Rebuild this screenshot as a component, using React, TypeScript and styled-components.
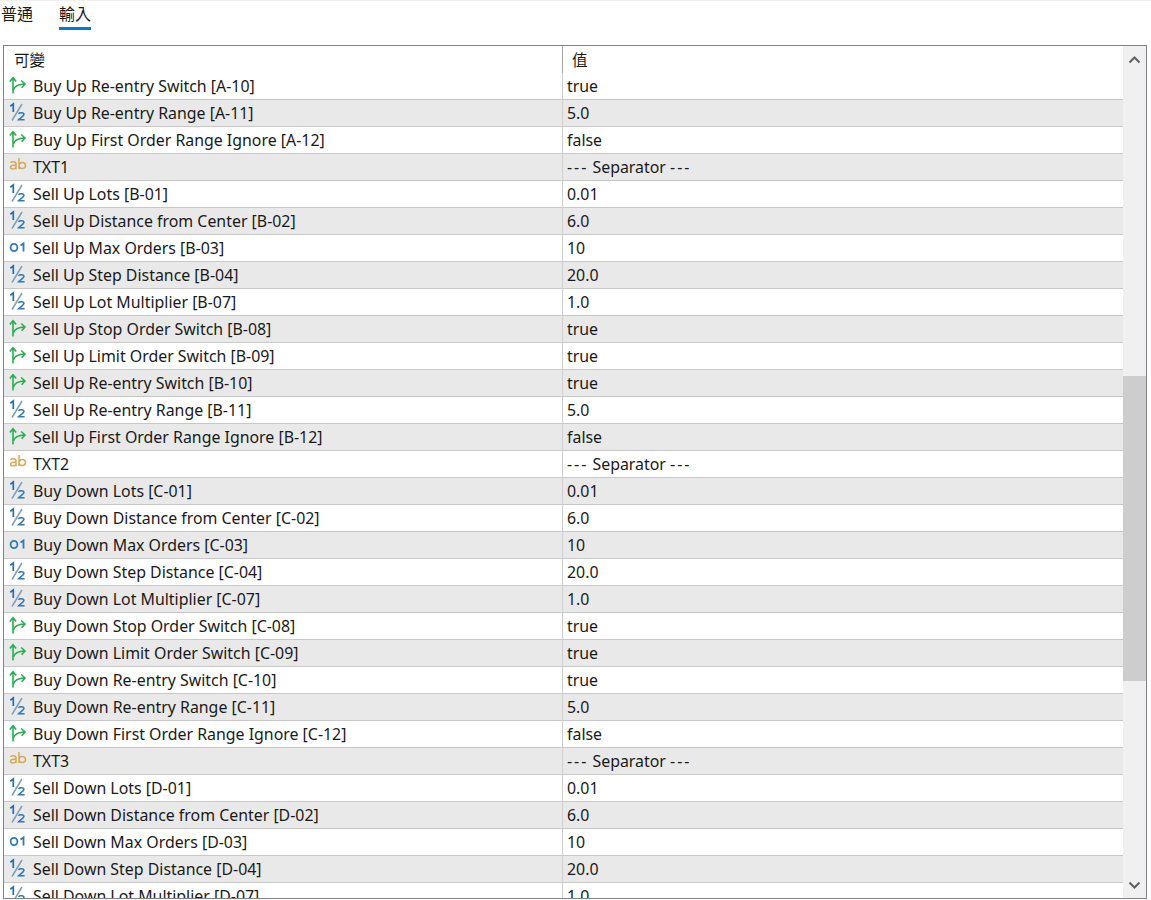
import React from "react";
import styled, { createGlobalStyle } from "styled-components";

const Global = createGlobalStyle`
  html, body { margin: 0; padding: 0; background: #fff; }
  body { font-family: "Noto Sans", "Noto Sans CJK TC", sans-serif; color: #1a1a1a; }
`;

const Page = styled.div`
  width: 1151px;
  height: 900px;
  overflow: hidden;
  display: flex;
  flex-direction: column;
  border-top: 1px solid #f0f0f0;
  box-sizing: border-box;
`;

const Tabs = styled.div`
  height: 44px;
  flex: none;
  display: flex;
  gap: 26px;
  padding-left: 1px;
`;

const Tab = styled.div<{ $active?: boolean }>`
  width: 32px;
  height: 29px;
  box-sizing: border-box;
  font: 16px/24px "Noto Sans CJK TC", sans-serif;
  white-space: nowrap;
  border-bottom: 3px solid ${(p) => (p.$active ? "#0078d7" : "transparent")};
`;

const Frame = styled.div`
  margin-left: 3px;
  width: 1144px;
  height: 854px;
  flex: none;
  box-sizing: border-box;
  border: 1px solid #82828c;
  display: flex;
  overflow: hidden;
`;

const ListArea = styled.div`
  flex: 1;
  min-width: 0;
  overflow: hidden;
`;

const columns = "558px 1fr";

const HeaderRow = styled.div`
  display: grid;
  grid-template-columns: ${columns};
  height: 27px;
  font: 15.5px/26px "Noto Sans CJK TC", sans-serif;
`;

const HeaderCell = styled.div<{ $last?: boolean }>`
  padding-left: ${(p) => (p.$last ? "9px" : "10px")};
  border-left: ${(p) => (p.$last ? "1px solid #a6a6a6" : "none")};
`;

const Row = styled.div<{ $shaded: boolean }>`
  display: grid;
  grid-template-columns: ${columns};
  height: 27px;
  box-sizing: border-box;
  border-bottom: 1px solid #c8c8c8;
  background: ${(p) => (p.$shaded ? "#e9e9e9" : "#ffffff")};
  font-size: 15.9px;
  line-height: 26px;
  white-space: nowrap;
`;

const NameCell = styled.div`
  display: flex;
  align-items: center;
  padding-left: 5px;
  gap: 5px;
`;

const ValueCell = styled.div`
  border-left: 1px solid #cfcfcf;
  padding-left: 4px;
`;

const Dashes = styled.span`
  letter-spacing: 2px;
`;

const IconBox = styled.svg`
  width: 19px;
  height: 19px;
  flex: none;
  position: relative;
  top: -2px;
`;

const Scrollbar = styled.div`
  width: 23px;
  flex: none;
  background: #f0f0f0;
  display: flex;
  flex-direction: column;
`;

const Arrow = styled.svg`
  width: 23px;
  height: 27px;
  flex: none;
`;

const Track = styled.div`
  flex: 1;
  padding-top: 303px;
`;

const Thumb = styled.div`
  height: 305px;
  background: #cdcdcd;
`;

type Kind = "bool" | "num" | "text" | "int";

const Icon = ({ kind }: { kind: Kind }) => {
  if (kind === "bool")
    return (
      <IconBox viewBox="0 0 19 19" fill="none" stroke="#27ae4f" strokeWidth="1.6">
        <path d="M4 18.500V3M0.800 6.500 4 2.800l3.200 3.700" />
        <path d="M4.300 15C5.500 11.500 9 9.300 15.500 9M12.200 5.500l3.800 3.500-3.400 3.800" />
      </IconBox>
    );
  if (kind === "num")
    return (
      <IconBox viewBox="0 0 19 19" fill="none" stroke="#2f7bb5" strokeWidth="1.5">
        <path d="M1.300 4.200 4.300 2V10" stroke="#2b6ea8" strokeWidth="1.700" />
        <path d="M3 18.500 13 2" stroke="#7f9fba" />
        <path d="M9.500 11.800c1-1.600 5.400-1.500 5.400.7 0 1.800-3.500 3-5.300 5.300h6" strokeWidth="1.600" />
      </IconBox>
    );
  if (kind === "int")
    return (
      <IconBox viewBox="0 0 19 19" fill="none" stroke="#2f7bb5" strokeWidth="1.800">
        <ellipse cx="5" cy="10.500" rx="3.400" ry="3.700" />
        <path d="M11.500 8.500 14.500 6.500v8" />
      </IconBox>
    );
  return (
    <IconBox viewBox="0 0 19 19" fill="none" stroke="#d8a85a" strokeWidth="1.500">
      <path d="M1.500 6.800c1-1.500 5.500-1.600 5.500 1v5.500M7 9.300c-3.300-.4-5.500.2-5.500 2 0 2.100 3.700 2.300 5.500.2" />
      <path d="M10 2v11M10 9.600c0-4 6.500-4 6.500 0 0 4-6.500 4-6.500 0" />
    </IconBox>
  );
};

const data: [Kind, string, string][] = [
  ["bool", "Buy Up Re-entry Switch [A-10]", "true"],
  ["num", "Buy Up Re-entry Range [A-11]", "5.0"],
  ["bool", "Buy Up First Order Range Ignore [A-12]", "false"],
  ["text", "TXT1", ""],
  ["num", "Sell Up Lots [B-01]", "0.01"],
  ["num", "Sell Up Distance from Center [B-02]", "6.0"],
  ["int", "Sell Up Max Orders [B-03]", "10"],
  ["num", "Sell Up Step Distance [B-04]", "20.0"],
  ["num", "Sell Up Lot Multiplier [B-07]", "1.0"],
  ["bool", "Sell Up Stop Order Switch [B-08]", "true"],
  ["bool", "Sell Up Limit Order Switch [B-09]", "true"],
  ["bool", "Sell Up Re-entry Switch [B-10]", "true"],
  ["num", "Sell Up Re-entry Range [B-11]", "5.0"],
  ["bool", "Sell Up First Order Range Ignore [B-12]", "false"],
  ["text", "TXT2", ""],
  ["num", "Buy Down Lots [C-01]", "0.01"],
  ["num", "Buy Down Distance from Center [C-02]", "6.0"],
  ["int", "Buy Down Max Orders [C-03]", "10"],
  ["num", "Buy Down Step Distance [C-04]", "20.0"],
  ["num", "Buy Down Lot Multiplier [C-07]", "1.0"],
  ["bool", "Buy Down Stop Order Switch [C-08]", "true"],
  ["bool", "Buy Down Limit Order Switch [C-09]", "true"],
  ["bool", "Buy Down Re-entry Switch [C-10]", "true"],
  ["num", "Buy Down Re-entry Range [C-11]", "5.0"],
  ["bool", "Buy Down First Order Range Ignore [C-12]", "false"],
  ["text", "TXT3", ""],
  ["num", "Sell Down Lots [D-01]", "0.01"],
  ["num", "Sell Down Distance from Center [D-02]", "6.0"],
  ["int", "Sell Down Max Orders [D-03]", "10"],
  ["num", "Sell Down Step Distance [D-04]", "20.0"],
  ["num", "Sell Down Lot Multiplier [D-07]", "1.0"],
];

export default function App() {
  return (
    <Page>
      <Global />
      <Tabs>
        <Tab>普通</Tab>
        <Tab $active>輸入</Tab>
      </Tabs>
      <Frame>
        <ListArea>
          <HeaderRow>
            <HeaderCell>可變</HeaderCell>
            <HeaderCell $last>值</HeaderCell>
          </HeaderRow>
          {data.map(([kind, name, value], i) => (
            <Row key={name} $shaded={i % 2 === 1}>
              <NameCell>
                <Icon kind={kind} />
                {name}
              </NameCell>
              <ValueCell>
                {kind === "text" ? (
                  <>
                    <Dashes>---</Dashes> Separator <Dashes>---</Dashes>
                  </>
                ) : (
                  value
                )}
              </ValueCell>
            </Row>
          ))}
        </ListArea>
        <Scrollbar>
          <Arrow viewBox="0 0 23 27" fill="none" stroke="#606060" strokeWidth="2">
            <path d="M6.500 16.500 11.500 11.500l5 5" />
          </Arrow>
          <Track>
            <Thumb />
          </Track>
          <Arrow viewBox="0 0 23 27" fill="none" stroke="#606060" strokeWidth="2">
            <path d="M6.500 11.500 11.500 16.500l5-5" />
          </Arrow>
        </Scrollbar>
      </Frame>
    </Page>
  );
}
